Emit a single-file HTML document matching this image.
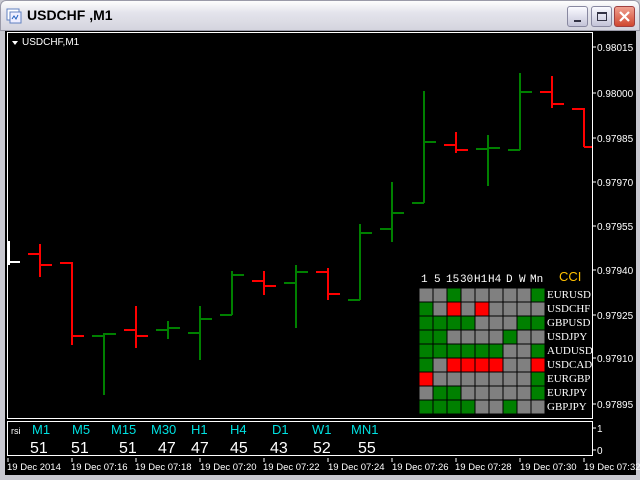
<!DOCTYPE html>
<html><head><meta charset="utf-8"><style>
*{margin:0;padding:0;box-sizing:border-box}
body{width:640px;height:480px;overflow:hidden;background:#c8c8d0;font-family:"Liberation Sans",sans-serif;position:relative}
.title{position:absolute;left:0;top:0;width:640px;height:31px;background:linear-gradient(#fdfdfd,#e4e4ec 40%,#d4d4de);border-radius:6px 6px 0 0;border:1px solid #9a9aa8}
.title span{position:absolute;left:26px;top:6px;font-weight:bold;font-size:14px;color:#000}
.btn{position:absolute;top:5px;width:21px;height:21px;border:1px solid #8888a0;border-radius:3px;background:linear-gradient(#fafaff,#c4c4d8)}
.black{position:absolute;left:5px;top:31px;width:631px;height:444px;background:#000}
</style></head><body>
<div class="title">
<svg style="position:absolute;left:5px;top:7px" width="16" height="16"><rect x="1" y="1" width="12" height="11" fill="#fff" stroke="#6080c0"/><rect x="4" y="4" width="11" height="11" fill="#eef" stroke="#6080c0"/><path d="M6 11 l2-3 2 3 2-4" stroke="#2060c0" fill="none"/></svg>
<span>USDCHF ,M1</span>
<div class="btn" style="left:566px"><div style="position:absolute;left:6px;top:13px;width:7px;height:2px;background:#334"></div></div>
<div class="btn" style="left:590px"><div style="position:absolute;left:5px;top:5px;width:10px;height:9px;border:1px solid #334;border-top-width:2px"></div></div>
<div class="btn" style="left:613px;background:linear-gradient(#f0a090,#d04830);border-color:#a04040"><svg width="19" height="19" style="position:absolute;left:0;top:0"><path d="M5 5L14 14M14 5L5 14" stroke="#fff" stroke-width="2.2"/></svg></div>
</div>
<div class="black"></div>
<svg style="position:absolute;left:0;top:0" width="640" height="480">
<rect x="7.5" y="32.5" width="585" height="386" fill="none" stroke="#fff"/>
<rect x="7.5" y="421.5" width="585" height="34" fill="none" stroke="#fff"/>
<path d="M12 41h6l-3 4z" fill="#fff"/>
<g stroke-width="2" fill="none">
<path d="M9 241v24M9 262h11" stroke="#fff"/>
<g stroke="#f00">
<path d="M40 244v33M28 254h12M40 265h12"/>
<path d="M72 262v83M60 263h12M72 336h12"/>
<path d="M136 306v42M124 330h12M136 336h12"/>
<path d="M264 271v24M252 281h12M264 286h12"/>
<path d="M328 268v32M316 272h12M328 294h12"/>
<path d="M456 132v21M444 145h12M456 150h12"/>
<path d="M552 76v32M540 92h12M552 104h12"/>
<path d="M584 108v39M572 109h12M584 147h8"/>
</g>
<g stroke="#008000">
<path d="M104 333v62M92 336h12M104 334h12"/>
<path d="M168 321v18M156 330h12M168 328h12"/>
<path d="M200 306v54M188 333h12M200 319h12"/>
<path d="M232 271v44M220 315h12M232 275h12"/>
<path d="M296 265v63M284 283h12M296 272h12"/>
<path d="M360 224v76M348 300h12M360 233h12"/>
<path d="M392 182v60M380 229h12M392 213h12"/>
<path d="M424 91v112M412 203h12M424 142h12"/>
<path d="M488 135v51M476 149h12M488 148h12"/>
<path d="M520 73v77M508 150h12M520 92h12"/>
</g>
</g>
<g stroke="#fff"><path d="M593 47h3M593 93h3M593 138h3M593 182h3M593 226h3M593 270h3M593 315h3M593 358h3M593 404h3M593 428h3M593 450h3"/>
<path d="M8 458v4M72 458v4M136 458v4M200 458v4M264 458v4M328 458v4M392 458v4M456 458v4M520 458v4M584 458v4"/></g>
<g fill="#fff" font-size="10" font-family="Liberation Sans,sans-serif">
<text x="597" y="51">0.98015</text><text x="597" y="97">0.98000</text><text x="597" y="142">0.97985</text><text x="597" y="186">0.97970</text><text x="597" y="230">0.97955</text><text x="597" y="274">0.97940</text><text x="597" y="319">0.97925</text><text x="597" y="362">0.97910</text><text x="597" y="408">0.97895</text>
<text x="597" y="432">1</text><text x="597" y="454">0</text>
<text x="22" y="45">USDCHF,M1</text>
<text x="11" y="434" font-size="9">rsi</text>
</g>
<g fill="#fff" font-size="9.5" font-family="Liberation Sans,sans-serif">
<text x="7" y="470">19 Dec 2014</text><text x="71" y="470">19 Dec 07:16</text><text x="135" y="470">19 Dec 07:18</text><text x="200" y="470">19 Dec 07:20</text><text x="263" y="470">19 Dec 07:22</text><text x="328" y="470">19 Dec 07:24</text><text x="392" y="470">19 Dec 07:26</text><text x="455" y="470">19 Dec 07:28</text><text x="520" y="470">19 Dec 07:30</text><text x="584" y="470">19 Dec 07:32</text>
</g>
<g fill="#00e0e0" font-size="13" font-family="Liberation Sans,sans-serif">
<text x="32" y="434">M1</text><text x="72" y="434">M5</text><text x="111" y="434">M15</text><text x="151" y="434">M30</text><text x="191" y="434">H1</text><text x="230" y="434">H4</text><text x="272" y="434">D1</text><text x="312" y="434">W1</text><text x="351" y="434">MN1</text>
</g>
<g fill="#fff" font-size="16" font-family="Liberation Sans,sans-serif">
<text x="30" y="453">51</text><text x="71" y="453">51</text><text x="119" y="453">51</text><text x="158" y="453">47</text><text x="191" y="453">47</text><text x="230" y="453">45</text><text x="270" y="453">43</text><text x="313" y="453">52</text><text x="358" y="453">55</text>
</g>
<g fill="#fff" font-size="11" font-family="Liberation Mono,monospace">
<text x="421" y="282">1</text><text x="434" y="282">5</text><text x="446" y="282">15</text><text x="460" y="282">30</text><text x="474" y="282">H1</text><text x="488" y="282">H4</text><text x="506" y="282">D</text><text x="519" y="282">W</text><text x="530" y="282">Mn</text>
</g>
<text x="559" y="281" fill="#ffc000" font-size="13" font-family="Liberation Sans,sans-serif">CCI</text>
<g id="grid" stroke="#000" stroke-width="1"></g>
<g fill="#fff" font-size="11" font-family="Liberation Serif,serif">
<text x="547" y="298">EURUSD</text><text x="547" y="312">USDCHF</text><text x="547" y="326">GBPUSD</text><text x="547" y="340">USDJPY</text><text x="547" y="354">AUDUSD</text><text x="547" y="368">USDCAD</text><text x="547" y="382">EURGBP</text><text x="547" y="396">EURJPY</text><text x="547" y="410">GBPJPY</text>
</g>
</svg>
<script>
var rows=["aagaaaaag","gararaaaa","ggggaaagg","ggaaaagaa","ggggggaag","garrrraar","raaaaaaag","aggaaaaag","ggggaagaa"];
var c={a:"#808080",g:"#008000",r:"#ff0000"},s="";
rows.forEach(function(r,i){for(var j=0;j<9;j++)s+='<rect x="'+(419+j*14)+'" y="'+(288+i*14)+'" width="14" height="14" fill="'+c[r[j]]+'"/>';});
document.getElementById("grid").innerHTML=s;
</script>
</body></html>
